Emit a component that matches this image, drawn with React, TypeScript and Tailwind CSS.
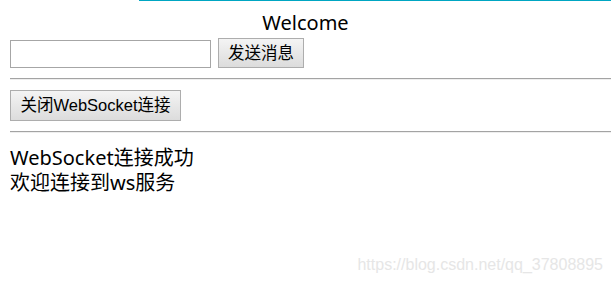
export default function App() {
  const btn =
    "px-[9px] border border-[#adadad] bg-gradient-to-b from-[#f4f4f4] to-[#dcdcdc] text-[16.5px] leading-none text-black font-['Liberation_Sans','Noto_Sans_CJK_SC',sans-serif]";
  const rule =
    "mt-[10px] -mr-[10px] border-t border-b border-t-[#a3a3a3] border-b-[#eeeeee]";

  return (
    <div className="relative h-[282px] w-[611px] overflow-hidden bg-white px-[10px] font-['Noto_Sans','Noto_Sans_CJK_SC',sans-serif] text-black">
      {/* accent line over the top */}
      <div className="absolute left-[139px] right-0 top-0 h-px bg-[#00a6c2]" />

      <div className="pt-[10px] text-center text-[20px] leading-[26px]">Welcome</div>

      <div className="flex items-end gap-[7px] pt-[2px]">
        <input
          type="text"
          className="h-[28px] w-[201px] border border-[#a6a6a6] bg-white px-1 outline-none"
        />
        <button className={btn + " h-[30px]"}>发送消息</button>
      </div>

      <hr className={rule} />

      <div className="pt-[10px]">
        <button className={btn + " h-[31px] w-[171px]"}>关闭WebSocket连接</button>
      </div>

      <hr className={rule} />

      <div className="pt-[12px] text-[20px] leading-[25px]">
        <div>WebSocket连接成功</div>
        <div>欢迎连接到ws服务</div>
      </div>

      {/* watermark */}
      <div className="absolute bottom-[9px] right-[8px] text-[16px] leading-none text-[#e6e6e6] font-['Liberation_Sans',sans-serif]">
        https://blog.csdn.net/qq_37808895
      </div>
    </div>
  );
}
